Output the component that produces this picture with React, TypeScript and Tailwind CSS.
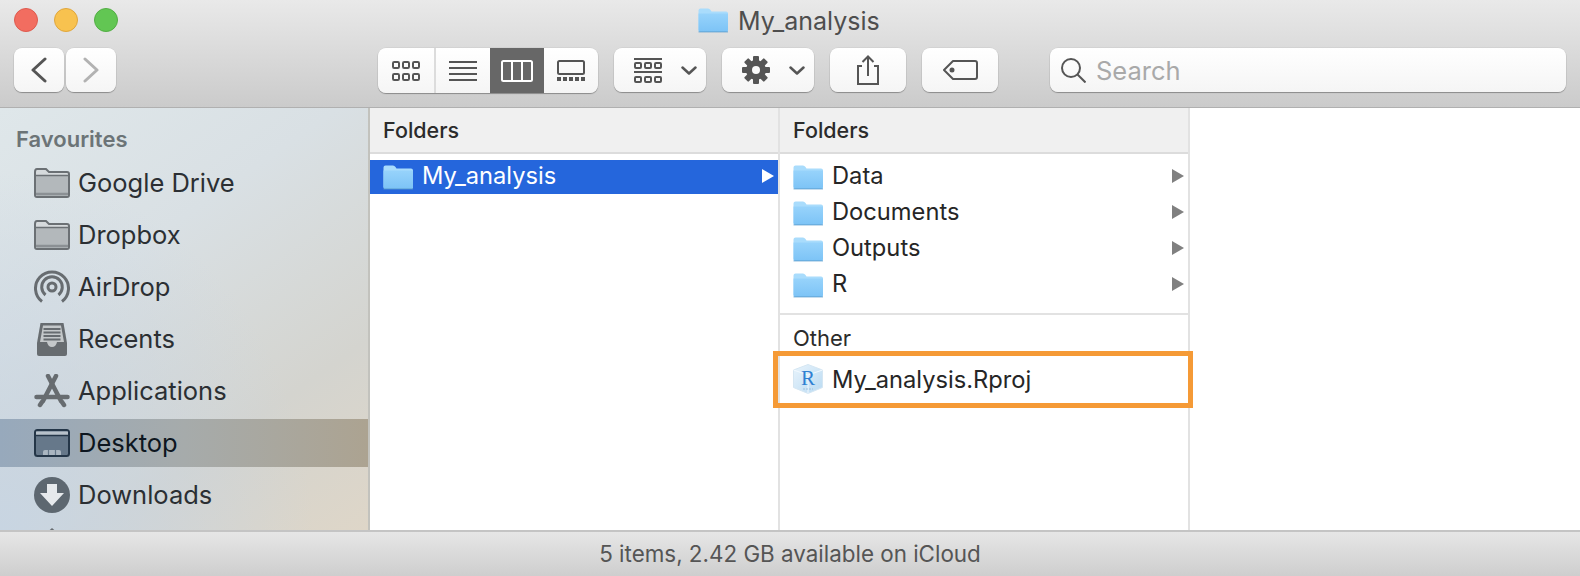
import type { ReactNode } from 'react'

const ui = 'font-["Inter","Liberation_Sans",sans-serif]'

function BlueFolder() {
  return (
    <svg width="30" height="25" viewBox="0 0 30 25" className="shrink-0">
      <defs>
        <linearGradient id="fld" x1="0" y1="0" x2="0" y2="1">
          <stop offset="0" stopColor="#97d3fb" />
          <stop offset="1" stopColor="#7cc3f6" />
        </linearGradient>
      </defs>
      <path d="M0.5 2.5Q0.5 0.5 2.5 0.5H10Q11.5 0.5 12.5 2L13.5 3.5H28Q30 3.5 30 5.5V22Q30 24 28 24H2.5Q0.5 24 0.5 22Z" fill="#a9dcfc" />
      <path d="M0.5 5.5H30V22Q30 24 28 24H2.5Q0.5 24 0.5 22Z" fill="url(#fld)" />
      <rect x="0.5" y="23.2" width="29.5" height="1.3" fill="#5f9fd0" opacity="0.7" />
    </svg>
  )
}

function GreyFolder() {
  return (
    <svg width="36" height="30" viewBox="0 0 36 30" className="shrink-0">
      <path d="M1 4Q1 1 3 1H12L15 4H33Q35 4 35 6V27Q35 29 33 29H3Q1 29 1 27Z" fill="#d6dadc" stroke="#6b7074" strokeWidth="2" />
      <path d="M2 8H34V27Q34 28 33 28H3Q2 28 2 27Z" fill="#b3b8bb" />
      <path d="M1.500 7.500H34.500" stroke="#6b7074" strokeWidth="1.500" />
      <path d="M2 26H34" stroke="#8b9094" strokeWidth="2.500" />
    </svg>
  )
}

function AirDrop() {
  return (
    <svg width="36" height="36" viewBox="0 0 36 36" fill="none" stroke="#676c70" strokeWidth="3" className="shrink-0">
      <path d="M8 32.500A16.500 16.500 0 1 1 28 32.500" />
      <path d="M11.500 26A10.300 10.300 0 1 1 24.500 26" />
      <circle cx="18" cy="18" r="4" />
    </svg>
  )
}

function Recents() {
  return (
    <svg width="36" height="36" viewBox="0 0 36 36" className="shrink-0">
      <path d="M6.500 2H29.500L33 22V33Q33 35 31 35H5Q3 35 3 33V22Z" fill="#676c70" />
      <path d="M9 4.500H27L30 21H23Q22 26 18 26Q14 26 13 21H6Z" fill="#c4c8ca" />
      <path d="M9.500 8H26.500M9.500 11.500H26.500M9.500 15H26.500M9.500 18.500H26.500" stroke="#676c70" strokeWidth="1.800" />
    </svg>
  )
}

function AppStore() {
  return (
    <svg width="36" height="34" viewBox="0 0 36 34" fill="none" stroke="#676c70" strokeLinecap="round" className="shrink-0">
      <path d="M14 2L27 27" strokeWidth="4.500" />
      <path d="M22 2L9 27" strokeWidth="4.500" />
      <path d="M2.500 23H33.500" strokeWidth="4.500" />
      <path d="M6 31L8 28M30 31L28 28" strokeWidth="4.500" />
    </svg>
  )
}

function DesktopIcon() {
  return (
    <svg width="36" height="28" viewBox="0 0 36 28" className="shrink-0">
      <rect x="1" y="1" width="34" height="26" rx="2.500" fill="#66788a" stroke="#243648" strokeWidth="2" />
      <path d="M2 2.500H34V6H2Z" fill="#b7c1ca" />
      <path d="M2 6.500H34" stroke="#243648" strokeWidth="1.500" />
      <path d="M9 26V23Q9 21 11 21H25Q27 21 27 23V26Z" fill="#aab6c1" />
      <path d="M14.500 21V26M21.500 21V26" stroke="#66788a" strokeWidth="1.200" />
    </svg>
  )
}

function DownloadIcon() {
  return (
    <svg width="36" height="36" viewBox="0 0 36 36" className="shrink-0">
      <circle cx="18" cy="18" r="18" fill="#5d6770" />
      <path d="M13 7H23V16H30L18 29L6 16H13Z" fill="#e6e9ec" />
    </svg>
  )
}

function HomeIcon() {
  return (
    <svg width="36" height="44" viewBox="0 0 36 44" className="shrink-0">
      <path d="M18 3L36 19H31V44H5V19H0Z" fill="#676c70" />
    </svg>
  )
}

function RprojIcon() {
  return (
    <svg width="30" height="30" viewBox="0 0 30 30" className="shrink-0 mb-[4px]">
      <defs>
        <linearGradient id="cube" x1="0" y1="0" x2="1" y2="1">
          <stop offset="0" stopColor="#e9f4fc" />
          <stop offset="1" stopColor="#b9daf2" />
        </linearGradient>
      </defs>
      <path d="M15 0.500L29.500 6V23.500L15 29.500L0.500 23.500V6Z" fill="url(#cube)" stroke="#d5e6f2" />
      <path d="M0.500 6L15 11L29.500 6M15 11V29.500" fill="none" stroke="#f2f9fe" strokeWidth="1" />
      <text x="15" y="20.500" textAnchor="middle" fontFamily="Liberation Serif, serif" fontSize="21" fill="#2f80d2">R</text>
      <path d="M10 25H20" stroke="#9fc2dd" strokeWidth="1.200" strokeDasharray="2 1" />
    </svg>
  )
}

function Triangle({ white }: { white?: boolean }) {
  return (
    <svg width="12" height="14" viewBox="0 0 12 14" className="shrink-0 mb-[2px]">
      <path d="M0 0L12 7L0 14Z" fill={white ? '#ffffff' : '#808080'} />
    </svg>
  )
}

function Btn({ w, children }: { w: string; children: ReactNode }) {
  return (
    <div className={`${w} h-[44px] flex items-center justify-center rounded-[8px] bg-gradient-to-b from-white to-[#f5f5f5] shadow-[0_1px_1px_rgba(0,0,0,0.3),0_0_0_0.5px_rgba(0,0,0,0.08)]`}>
      {children}
    </div>
  )
}

function SixSquares() {
  return (
    <g fill="none" stroke="#555" strokeWidth="2">
      <rect x="1" y="1" width="6" height="6" rx="1.200" />
      <rect x="11" y="1" width="6" height="6" rx="1.200" />
      <rect x="21" y="1" width="6" height="6" rx="1.200" />
      <rect x="1" y="13" width="6" height="6" rx="1.200" />
      <rect x="11" y="13" width="6" height="6" rx="1.200" />
      <rect x="21" y="13" width="6" height="6" rx="1.200" />
    </g>
  )
}

function Chevron() {
  return (
    <svg width="16" height="9" viewBox="0 0 16 9" fill="none" stroke="#555" strokeWidth="2.500" strokeLinecap="round" strokeLinejoin="round">
      <path d="M1.500 1.500L8 7.500L14.500 1.500" />
    </svg>
  )
}

function Gear() {
  const teeth = [0, 45, 90, 135]
  return (
    <svg width="28" height="28" viewBox="0 0 28 28">
      {teeth.map(a => (
        <rect key={a} x="11" y="0" width="6" height="28" rx="1" fill="#555" transform={`rotate(${a} 14 14)`} />
      ))}
      <circle cx="14" cy="14" r="10" fill="#555" />
      <circle cx="14" cy="14" r="4" fill="#fafafa" />
    </svg>
  )
}

function ArrangeIcon() {
  return (
    <svg width="28" height="25" viewBox="0 0 28 25">
      <path d="M0 1H28M0 14H28" stroke="#555" strokeWidth="2" />
      <g fill="none" stroke="#555" strokeWidth="2">
        <rect x="1" y="5" width="6" height="5" rx="1" />
        <rect x="11" y="5" width="6" height="5" rx="1" />
        <rect x="21" y="5" width="6" height="5" rx="1" />
        <rect x="1" y="19" width="6" height="5" rx="1" />
        <rect x="11" y="19" width="6" height="5" rx="1" />
        <rect x="21" y="19" width="6" height="5" rx="1" />
      </g>
    </svg>
  )
}

function ViewSwitch() {
  return (
    <div className="w-[220px] h-[45px] flex rounded-[8px] overflow-hidden bg-gradient-to-b from-white to-[#f5f5f5] shadow-[0_1px_1px_rgba(0,0,0,0.3),0_0_0_0.5px_rgba(0,0,0,0.08)]">
      <div className="w-[58px] flex items-center justify-center border-r-2 border-[#dcdcdc]">
        <svg width="28" height="20" viewBox="0 0 28 20"><SixSquares /></svg>
      </div>
      <div className="w-[54px] flex items-center justify-center">
        <svg width="28" height="22" viewBox="0 0 28 22" fill="none" stroke="#555" strokeWidth="2">
          <path d="M0 2H28M0 8H28M0 14H28M0 20H28" />
        </svg>
      </div>
      <div className="w-[54px] flex items-center justify-center bg-[#676767]">
        <svg width="32" height="22" viewBox="0 0 32 22" fill="none" stroke="#fff" strokeWidth="2">
          <rect x="1" y="1" width="30" height="20" rx="1.500" />
          <path d="M11 1V21M21 1V21" />
        </svg>
      </div>
      <div className="w-[54px] flex items-center justify-center">
        <svg width="28" height="22" viewBox="0 0 28 22">
          <rect x="1" y="1" width="26" height="13" rx="1.500" fill="none" stroke="#555" strokeWidth="2" />
          <path d="M0 19H4M6 19H10M12 19H16M18 19H22M24 19H28" stroke="#555" strokeWidth="4" />
        </svg>
      </div>
    </div>
  )
}

function Toolbar() {
  return (
    <div className="h-[108px] shrink-0 border-b border-[#b0b0b0] bg-gradient-to-b from-[#e9e9e9] to-[#cbcbcb] px-[14px] pt-[8px]">
      <div className="h-[24px] flex items-center gap-[16px]">
        <div className="w-[24px] h-[24px] rounded-full bg-[#f26d60] border border-[#de5a4e]" />
        <div className="w-[24px] h-[24px] rounded-full bg-[#f8c24f] border border-[#e0a63c]" />
        <div className="w-[24px] h-[24px] rounded-full bg-[#62c653] border border-[#52ae44]" />
        <div className="ml-[564px] flex items-center gap-[10px]">
          <BlueFolder />
          <span className="text-[25px] leading-[24px] pt-[2px] text-[#4e4e4e]">My_analysis</span>
        </div>
      </div>
      <div className="mt-[16px] flex items-start">
        <div className="flex gap-[2px]">
          <Btn w="w-[50px]">
            <svg width="16" height="26" viewBox="0 0 16 26" fill="none" stroke="#555" strokeWidth="3" strokeLinecap="round" strokeLinejoin="round"><path d="M14 2L2 13L14 24" /></svg>
          </Btn>
          <Btn w="w-[50px]">
            <svg width="16" height="26" viewBox="0 0 16 26" fill="none" stroke="#b2b2b2" strokeWidth="3" strokeLinecap="round" strokeLinejoin="round"><path d="M2 2L14 13L2 24" /></svg>
          </Btn>
        </div>
        <div className="ml-[262px]"><ViewSwitch /></div>
        <div className="ml-[16px] flex gap-[16px]">
          <Btn w="w-[92px]">
            <div className="w-full flex items-center gap-[19px] pl-[20px]">
              <ArrangeIcon />
              <Chevron />
            </div>
          </Btn>
          <Btn w="w-[92px]">
            <div className="w-full flex items-center gap-[19px] pl-[20px]">
              <Gear />
              <Chevron />
            </div>
          </Btn>
          <Btn w="w-[76px]">
            <svg width="22" height="30" viewBox="0 0 22 30" fill="none" stroke="#555" strokeWidth="2">
              <path d="M5 11H1V29H21V11H17" />
              <path d="M11 21V1.500M5.500 7L11 1.500L16.500 7" />
            </svg>
          </Btn>
          <Btn w="w-[76px]">
            <svg width="35" height="20" viewBox="0 0 35 20" fill="none" stroke="#555" strokeWidth="2">
              <path d="M10 1H32Q34 1 34 3V17Q34 19 32 19H10L1 10Z" strokeLinejoin="round" />
              <circle cx="9" cy="10" r="1.500" fill="#555" />
            </svg>
          </Btn>
        </div>
        <div className="ml-[52px] w-[518px] h-[44px] flex items-center pl-[11px] gap-[10px] rounded-[8px] bg-gradient-to-b from-white to-[#f5f5f5] shadow-[0_1px_1px_rgba(0,0,0,0.3),0_0_0_0.5px_rgba(0,0,0,0.08)]">
          <svg width="25" height="25" viewBox="0 0 25 25" fill="none" stroke="#555" strokeWidth="2">
            <circle cx="10" cy="10" r="9" />
            <path d="M16.500 16.500L24.500 24.500" />
          </svg>
          <span className="text-[25.5px] leading-[24px] pt-[2px] text-[#a9a9a9]">Search</span>
        </div>
      </div>
    </div>
  )
}

function SideItem({ icon, label, active }: { icon: ReactNode; label?: string; active?: boolean }) {
  return (
    <div className={`h-[48px] shrink-0 flex items-center gap-[8px] pl-[34px] text-[25.5px] ${active ? 'bg-gradient-to-r from-[#97a9bc] via-[#a6abab] to-[#aca391] text-[#0d1620]' : 'text-[#2b2f33]'}`}>
      <div className="w-[36px] flex justify-center">{icon}</div>
      {label && <span>{label}</span>}
    </div>
  )
}

function Sidebar() {
  return (
    <div className="w-[370px] shrink-0 border-r-2 border-[#c2c2bd] overflow-hidden bg-[radial-gradient(ellipse_at_0%_100%,#c8d5e2_0%,rgba(200,213,226,0)_60%),linear-gradient(145deg,#dfe7ea_0%,#d9e0e4_35%,#d4d4cf_72%,#ded6c8_100%)]">
      <div className="h-[51px] pl-[16px] pt-[18px] text-[22px] leading-[26px] font-semibold text-[#6c7477]">Favourites</div>
      <div className="flex flex-col gap-[4px]">
        <SideItem icon={<GreyFolder />} label="Google Drive" />
        <SideItem icon={<GreyFolder />} label="Dropbox" />
        <SideItem icon={<AirDrop />} label="AirDrop" />
        <SideItem icon={<Recents />} label="Recents" />
        <SideItem icon={<AppStore />} label="Applications" />
        <SideItem icon={<DesktopIcon />} label="Desktop" active />
        <SideItem icon={<DownloadIcon />} label="Downloads" />
        <SideItem icon={<HomeIcon />} />
      </div>
    </div>
  )
}

function ColHeader() {
  return (
    <div className="h-[46px] border-b-2 border-[#dcdcdc] bg-[#f0f0f0] pl-[13px] flex items-center text-[21.500px] font-medium text-[#2b2b2b]">Folders</div>
  )
}

function Row({ icon, label, arrow, selected }: { icon: ReactNode; label: string; arrow?: boolean; selected?: boolean }) {
  return (
    <div className={`h-[34px] mt-[2px] flex items-center pl-[13px] pr-[4px] gap-[9px] text-[23.700px] ${selected ? 'bg-[#2566dc] text-white' : 'text-[#262626]'}`}>
      {icon}
      <span className="flex-1 pb-[2px]">{label}</span>
      {arrow && <Triangle white={selected} />}
    </div>
  )
}

export default function App() {
  return (
    <div className={`${ui} w-[1580px] h-[576px] flex flex-col overflow-hidden bg-white`}>
      <Toolbar />
      <div className="flex-1 min-h-0 flex">
        <Sidebar />
        <div className="w-[410px] border-r-2 border-[#e2e2e2]">
          <ColHeader />
          <div className="pt-[4px]">
            <Row icon={<BlueFolder />} label="My_analysis" arrow selected />
          </div>
        </div>
        <div className="w-[410px] border-r-2 border-[#e2e2e2]">
          <ColHeader />
          <div className="pt-[4px]">
            <Row icon={<BlueFolder />} label="Data" arrow />
            <Row icon={<BlueFolder />} label="Documents" arrow />
            <Row icon={<BlueFolder />} label="Outputs" arrow />
            <Row icon={<BlueFolder />} label="R" arrow />
            <div className="mt-[11px] border-t-2 border-[#e2e2e2] pl-[13px] pt-[9px] h-[49px] text-[22px] leading-[28px] text-[#2b2b2b]">Other</div>
            <div className="relative">
              <Row icon={<RprojIcon />} label="My_analysis.Rproj" />
              <div className="absolute left-[-7px] right-[-5px] top-[-13px] h-[57px] border-[5px] border-[#f59a36]" />
            </div>
          </div>
        </div>
        <div className="flex-1" />
      </div>
      <div className="h-[46px] shrink-0 border-t-2 border-[#c4c4c4] bg-gradient-to-b from-[#e6e6e6] to-[#cecece] flex items-center justify-center text-[22.400px] text-[#555]">
        5 items, 2.42 GB available on iCloud
      </div>
    </div>
  )
}
